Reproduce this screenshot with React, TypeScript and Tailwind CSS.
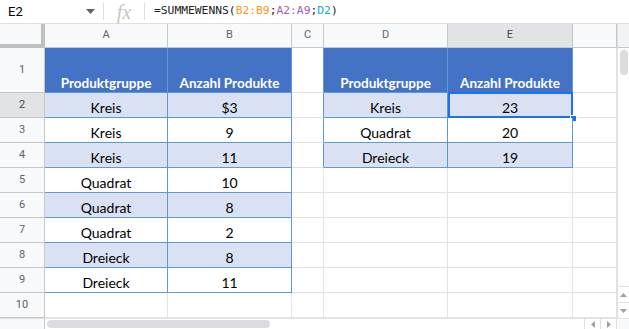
import React from 'react';

const data = [
  ['Kreis', '$3'],
  ['Kreis', '9'],
  ['Kreis', '11'],
  ['Quadrat', '10'],
  ['Quadrat', '8'],
  ['Quadrat', '2'],
  ['Dreieck', '8'],
  ['Dreieck', '11'],
];

const summary = [
  ['Kreis', '23'],
  ['Quadrat', '20'],
  ['Dreieck', '19'],
];

const cellFont = { fontFamily: 'Lato, "Open Sans", sans-serif' };
const uiFont = { fontFamily: 'Roboto, "Liberation Sans", sans-serif' };

function ColHead({ label, active }: { label: string; active?: boolean }) {
  return (
    <div
      className={
        active
          ? 'flex items-center justify-center border-r border-b border-r-[#c7c7c7] border-b-[#c7c7c7] bg-[#e1e3e6] text-[11px] text-[#444746]'
          : 'flex items-center justify-center border-r border-b border-r-[#c7c7c7] border-b-[#c7c7c7] bg-[#f8f9fa] text-[11px] text-[#5f6368]'
      }
      style={uiFont}
    >
      {label}
    </div>
  );
}

function RowHead({ n }: { n: number }) {
  return (
    <div
      className={
        n === 2
          ? 'flex items-center justify-center border-r border-b border-r-[#c7c7c7] border-b-[#c7c7c7] bg-[#e1e3e6] text-[11px] text-[#444746]'
          : 'flex items-center justify-center border-r border-b border-r-[#c7c7c7] border-b-[#c7c7c7] bg-[#f8f9fa] text-[11px] text-[#5f6368]'
      }
      style={uiFont}
    >
      {n}
    </div>
  );
}

function HeaderCell({ text }: { text: string }) {
  return (
    <div
      className="flex items-end justify-center border-r border-b border-[#5b9bd5] bg-[#4472c4] pb-[1px] text-[13.5px] leading-[16px] font-bold text-white"
      style={cellFont}
    >
      {text}
    </div>
  );
}

function DataCell({ text, shaded, selected }: { text: string; shaded: boolean; selected?: boolean }) {
  return (
    <div
      className={
        shaded
          ? 'relative flex items-end justify-center border-r border-b border-[#5b9bd5] bg-[#d9e1f2] pb-[1px] text-[14px] leading-[16px] text-black'
          : 'relative flex items-end justify-center border-r border-b border-[#5b9bd5] bg-white pb-[1px] text-[14px] leading-[16px] text-black'
      }
      style={cellFont}
    >
      {text}
      {selected && (
        <>
          <div className="pointer-events-none absolute left-0 top-[-1px] right-[-1px] bottom-[-1px] border-2 border-[#1a73e8]" />
          <div className="absolute right-[-5px] bottom-[-5px] h-[7px] w-[7px] border border-white bg-[#1a73e8]" />
        </>
      )}
    </div>
  );
}

function Empty({ blueRight }: { blueRight?: boolean }) {
  return (
    <div
      className={
        blueRight
          ? 'border-r border-b border-r-[#5b9bd5] border-b-[#e2e2e2] bg-white'
          : 'border-r border-b border-[#e2e2e2] bg-white'
      }
    />
  );
}

export default function App() {
  const rows: React.ReactNode[] = [];
  for (let r = 2; r <= 10; r++) {
    const d = data[r - 2];
    const s = summary[r - 2];
    const shaded = r % 2 === 0;
    rows.push(
      <React.Fragment key={r}>
        <RowHead n={r} />
        {d ? <DataCell text={d[0]} shaded={shaded} /> : <Empty />}
        {d ? <DataCell text={d[1]} shaded={shaded} /> : <Empty />}
        <Empty blueRight={r <= 4} />
        {s ? <DataCell text={s[0]} shaded={shaded} /> : <Empty />}
        {s ? <DataCell text={s[1]} shaded={shaded} selected={r === 2} /> : <Empty />}
        <Empty />
      </React.Fragment>
    );
  }

  return (
    <div className="flex h-[329px] w-[629px] flex-col overflow-hidden bg-white">
      {/* Formelleiste */}
      <div className="flex h-[24px] shrink-0 items-center border-b border-[#e0e0e0] bg-white" style={uiFont}>
        <div className="flex w-[103px] items-center pl-[8px] pr-[6px] text-[13px] text-black">
          <span className="flex-1">E2</span>
          <svg width="9" height="5" viewBox="0 0 9 5" className="mr-[2px]">
            <path d="M0 0h9L4.5 5z" fill="#5f6368" />
          </svg>
        </div>
        <div className="h-[17px] w-px bg-[#dadce0]" />
        <div className="flex w-[40px] items-center justify-center">
          <span className="text-[20px] italic text-[#c4c7c5]" style={{ fontFamily: '"Liberation Serif", serif' }}>
            fx
          </span>
        </div>
        <div className="h-[17px] w-px bg-[#dadce0]" />
        <div className="pl-[9px] text-[11.3px] text-[#202124]" style={{ fontFamily: '"DejaVu Sans Mono", monospace' }}>
          =SUMMEWENNS(<span className="text-[#f7981d]">B2:B9</span>;<span className="text-[#9f5cc0]">A2:A9</span>;
          <span className="text-[#11a9cc]">D2</span>)
        </div>
      </div>

      <div className="flex">
        {/* Tabelle */}
        <div className="grid grid-cols-[45px_123px_124px_32px_124px_125px_44px] grid-rows-[24px_45px_repeat(9,25px)]">
          <div className="border-r-4 border-b-4 border-[#c0c0c0] bg-[#f8f9fa]" />
          <ColHead label="A" />
          <ColHead label="B" />
          <ColHead label="C" />
          <ColHead label="D" />
          <ColHead label="E" active />
          <ColHead label="" />

          <RowHead n={1} />
          <HeaderCell text="Produktgruppe" />
          <HeaderCell text="Anzahl Produkte" />
          <Empty blueRight />
          <HeaderCell text="Produktgruppe" />
          <HeaderCell text="Anzahl Produkte" />
          <Empty />

          {rows}
        </div>

        {/* vertikale Bildlaufleiste */}
        <div className="flex w-[12px] flex-col border-l border-[#e0e0e0]">
          <div className="h-[24px] border-b border-[#c7c7c7] bg-[#f1f3f4]" />
          <div className="flex-1 pt-[2px]">
            <div className="mx-auto h-[25px] w-[8px] rounded-full bg-[#dadce0]" />
          </div>
          <div className="flex h-[16px] items-center justify-center border-t border-[#e0e0e0]">
            <svg width="7" height="4" viewBox="0 0 7 4">
              <path d="M0 4h7L3.5 0z" fill="#9aa0a6" />
            </svg>
          </div>
          <div className="flex h-[16px] items-center justify-center border-t border-[#e0e0e0]">
            <svg width="7" height="4" viewBox="0 0 7 4">
              <path d="M0 0h7L3.5 4z" fill="#9aa0a6" />
            </svg>
          </div>
        </div>
      </div>

      {/* horizontale Bildlaufleiste */}
      <div className="flex h-[11px] border-t border-[#e0e0e0]">
        <div className="w-[45px] border-r border-[#c7c7c7] bg-[#f8f9fa]" />
        <div className="flex-1 pl-[2px] pt-[1px]">
          <div className="h-[8px] w-[223px] rounded-full bg-[#dadce0]" />
        </div>
        <div className="flex w-[16px] items-center justify-center border-l border-[#e0e0e0]">
          <svg width="4" height="7" viewBox="0 0 4 7">
            <path d="M4 0v7L0 3.5z" fill="#9aa0a6" />
          </svg>
        </div>
        <div className="flex w-[16px] items-center justify-center border-l border-[#e0e0e0]">
          <svg width="4" height="7" viewBox="0 0 4 7">
            <path d="M0 0v7L4 3.5z" fill="#9aa0a6" />
          </svg>
        </div>
        <div className="w-[13px] border-l border-[#e0e0e0] bg-[#f8f9fa]" />
      </div>
    </div>
  );
}
